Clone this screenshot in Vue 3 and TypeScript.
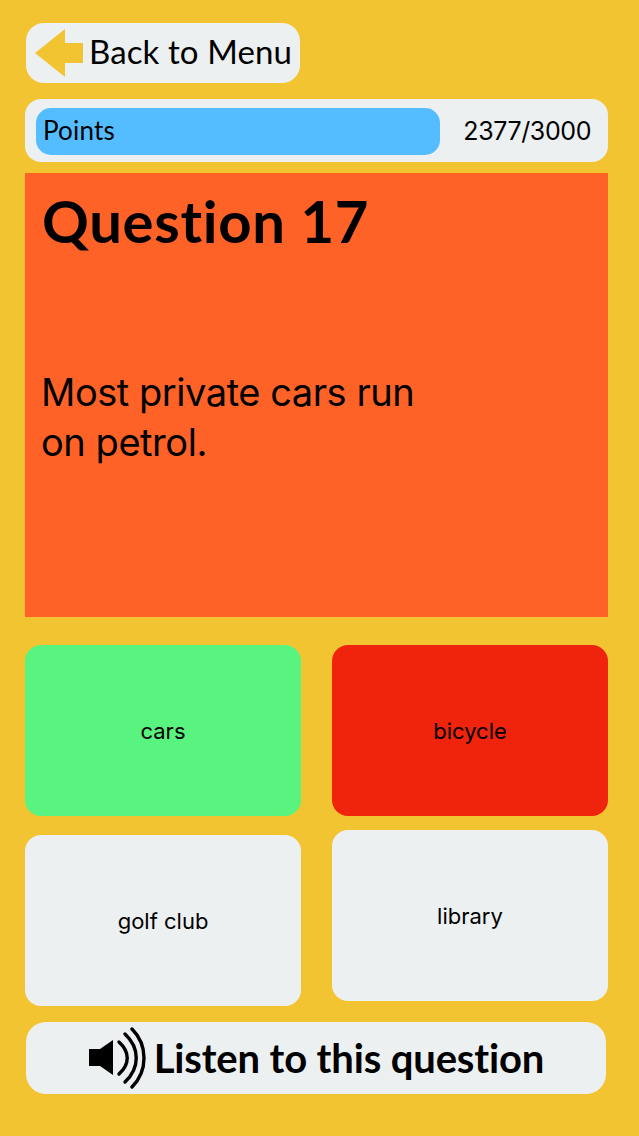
<template>
  <div class="screen">
    <button class="back-btn">
      <svg class="back-icon" width="48" height="48" viewBox="0 0 48 48">
        <polygon points="0,24 30,0 30,14 48,14 48,34 30,34 30,48" fill="#f3c431"></polygon>
      </svg>
      <span>Back to Menu</span>
    </button>

    <div class="points">
      <div class="points-bar" :style="{ width: barWidth + 'px' }">Points</div>
      <span class="points-value">{{ points }}/{{ maxPoints }}</span>
    </div>

    <section class="question">
      <h1>Question 17</h1>
      <p>Most private cars run on petrol.</p>
    </section>

    <div class="answers">
      <div class="answer-col first">
        <button class="answer correct">cars</button>
        <button class="answer">golf club</button>
      </div>
      <div class="answer-col second">
        <button class="answer wrong">bicycle</button>
        <button class="answer">library</button>
      </div>
    </div>

    <button class="listen-btn">
      <svg width="58" height="62" viewBox="-1 0 58 62" fill="none" stroke="#000" stroke-width="3.4" stroke-linecap="round">
        <polygon points="0,22 11,22 24,13 24,48 11,39 0,39" fill="#000" stroke="none"></polygon>
        <path d="M30 15C41 25 41 37 30 47"></path>
        <path d="M36 7C51 21 51 41 36 55"></path>
        <path d="M43 2C59 18 59 44 43 60"></path>
      </svg>
      <span>Listen to this question</span>
    </button>
  </div>
</template>

<script setup lang="ts">
const points = 2377
const maxPoints = 3000
const barWidth = 404
</script>

<style>
html,
body {
  background: #f3c431;
}
</style>

<style scoped>
.screen {
  width: 639px;
  height: 1136px;
  box-sizing: border-box;
  padding: 23px 31px 0 25px;
  background: #f3c431;
  display: flex;
  flex-direction: column;
  color: #000;
  font-family: Inter, "Liberation Sans", sans-serif;
  font-variant-ligatures: none;
}

button {
  border: none;
  padding: 0;
  color: inherit;
  font-family: inherit;
  font-variant-ligatures: none;
  cursor: pointer;
}

.back-btn {
  width: 274px;
  height: 60px;
  margin-left: 1px;
  padding: 0 0 4px 9px;
  box-sizing: border-box;
  display: flex;
  align-items: center;
  gap: 6px;
  background: #ecf0f1;
  border-radius: 18px;
  font-family: Lato, sans-serif;
  font-size: 33px;
  letter-spacing: 0.1px;
  white-space: nowrap;
}

.back-icon {
  flex-shrink: 0;
  margin-top: 4px;
}

.points {
  height: 63px;
  margin-top: 16px;
  padding: 9px 17px 7px 11px;
  box-sizing: border-box;
  display: flex;
  align-items: center;
  justify-content: space-between;
  background: #ecf0f1;
  border-radius: 16px;
}

.points-bar {
  height: 47px;
  padding: 0 0 3px 7px;
  box-sizing: border-box;
  display: flex;
  align-items: center;
  background: #54bdff;
  border-radius: 15px;
  font-family: Lato, sans-serif;
  font-size: 26px;
  letter-spacing: 0.2px;
}

.points-value {
  margin-bottom: 2px;
  font-size: 25px;
  letter-spacing: -0.4px;
}

.question {
  height: 444px;
  margin-top: 11px;
  padding: 16px 17px;
  box-sizing: border-box;
  background: #ff6226;
}

.question h1 {
  margin: 0;
  font-family: Lato, sans-serif;
  font-size: 58px;
  font-weight: 700;
  line-height: 64px;
  letter-spacing: 0.7px;
}

.question p {
  width: 400px;
  margin: 114px 0 0 -1px;
  font-size: 38px;
  line-height: 50px;
  letter-spacing: -0.45px;
}

.answers {
  margin-top: 28px;
  display: flex;
  gap: 31px;
}

.answer-col {
  width: 276px;
  display: flex;
  flex-direction: column;
}

.answer-col.first {
  gap: 19px;
}

.answer-col.second {
  gap: 14px;
}

.answer {
  height: 171px;
  background: #ecf0f1;
  border-radius: 16px;
  font-size: 22px;
}

.answer.correct {
  background: #59f47f;
}

.answer.wrong {
  background: #f0230d;
}

.listen-btn {
  width: 580px;
  height: 72px;
  margin: 16px 0 0 1px;
  display: flex;
  align-items: center;
  justify-content: center;
  gap: 8px;
  background: #ecf0f1;
  border-radius: 20px;
  font-family: Lato, sans-serif;
  font-size: 40px;
  font-weight: 700;
  letter-spacing: -0.15px;
  white-space: nowrap;
}
</style>
